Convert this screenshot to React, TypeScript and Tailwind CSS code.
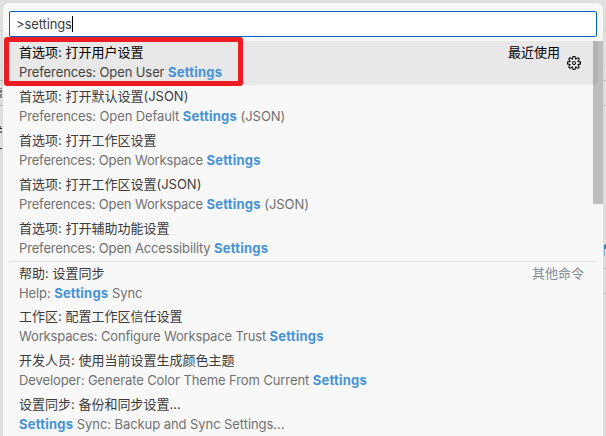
import { VscSettingsGear } from "react-icons/vsc";

type Command = { label: string; before: string; after?: string; note?: string; tight?: boolean };

const commands: Command[] = [
  { label: "首选项: 打开用户设置", before: "Preferences: Open User ", note: "最近使用" },
  { label: "首选项: 打开默认设置(JSON)", before: "Preferences: Open Default ", after: " (JSON)" },
  { label: "首选项: 打开工作区设置", before: "Preferences: Open Workspace ", tight: true },
  { label: "首选项: 打开工作区设置(JSON)", before: "Preferences: Open Workspace ", after: " (JSON)", tight: true },
  { label: "首选项: 打开辅助功能设置", before: "Preferences: Open Accessibility ", tight: true },
  { label: "帮助: 设置同步", before: "Help: ", after: " Sync", note: "其他命令" },
  { label: "工作区: 配置工作区信任设置", before: "Workspaces: Configure Workspace Trust ", tight: true },
  { label: "开发人员: 使用当前设置生成颜色主题", before: "Developer: Generate Color Theme From Current " },
  { label: "设置同步: 备份和同步设置...", before: "", after: " Sync: Backup and Sync Settings..." },
];

function Row({ command, index }: { command: Command; index: number }) {
  const selected = index === 0;
  const divided = index === 5;
  return (
    <li
      className={`flex h-11 shrink-0 justify-between pl-2.5 ${
        selected ? "rounded-[3px] bg-[#e8e8e8] text-black" : "text-[#3b3b3b]"
      } ${divided ? "mr-px border-t border-[#e0e0e0]" : ""}`}
    >
      <div className="flex flex-col whitespace-pre">
        <span className="h-5 leading-[22px]">{command.label}</span>
        <span
          className={`h-5 leading-[22px] ${command.tight ? "tracking-[-0.15px]" : "tracking-[-0.1px]"} ${
            selected ? "text-[#424242]" : "text-[#717171]"
          }`}
        >
          {command.before}
          <b className="font-bold tracking-[0.22px] text-[#4593d6]">Settings</b>
          {command.after && <span className="tracking-[-0.07px]">{command.after}</span>}
        </span>
      </div>
      {command.note && (
        <div className={`flex ${selected ? "pr-[17px]" : "pr-[13px] text-[#868d99]"}`}>
          <span className="leading-[22px]">{command.note}</span>
          {selected && <VscSettingsGear className="ml-[7px] mt-[15px] size-3.5 text-black" />}
        </div>
      )}
    </li>
  );
}

function LeftEdge() {
  return (
    <div className="flex w-[3px] shrink-0 flex-col">
      <i className="mt-[30px] h-px bg-[#cecece]" />
      <i className="mt-[34px] h-px bg-[#cecece]" />
      <i className="mt-[14px] h-px bg-[#b8b8b8]" />
      <i className="mt-[7px] h-px w-0.5 bg-[#8a8a8a]" />
      <i className="mt-px h-[3px] w-0.5 bg-[#777]" />
      <i className="mt-px h-1 w-0.5 bg-[#888]" />
      <i className="mt-[7px] h-px w-0.5 bg-[#b8b8b8]" />
      <i className="mt-5 h-0.5 w-px bg-[#777]" />
      <i className="h-px w-0.5 bg-[#222]" />
      <i className="mt-0.5 h-0.5 w-0.5 bg-[#777]" />
      <i className="mt-[15px] h-px w-0.5 bg-[#222]" />
    </div>
  );
}

function RightEdge() {
  return (
    <div className="flex w-[3px] shrink-0 flex-col items-end">
      <i className="mt-[30px] h-px w-0.5 bg-[#cecece]" />
      <i className="mt-[34px] h-px w-0.5 bg-[#cecece]" />
      <i className="mt-[14px] h-px w-0.5 bg-[#b8b8b8]" />
      <i className="mt-[24px] h-px w-0.5 bg-[#b8b8b8]" />
      <i className="mt-[138px] h-px w-px bg-[#5b96c8]" />
      <i className="h-1 w-0.5 bg-[#3f86c2]" />
      <i className="mr-px h-[7px] w-px bg-[#7eb0da]" />
      <i className="mt-3 h-px w-0.5 bg-[#b8b8b8]" />
      <i className="mt-[24px] h-px w-0.5 bg-[#b8b8b8]" />
    </div>
  );
}

export default function App() {
  return (
    <div className="relative flex h-[436px] w-[606px] overflow-hidden bg-[#e3e3e3] font-['Inter','Noto_Sans_CJK_SC',sans-serif] text-[13px]">
      <LeftEdge />
      <main className="relative mt-[3px] flex h-[440px] w-[600px] shrink-0 flex-col rounded-t-md bg-[#f8f8f8] pl-1.5 pt-2 shadow-[0_0_4px_rgba(0,0,0,0.08)]">
        <div className="flex h-[26px] w-[588px] shrink-0 items-center rounded-[2px] border border-[#005fb8] bg-white pl-1.5 text-[#3b3b3b]">
          <span className="pt-0.5 tracking-[-0.12px]">&gt;settings</span>
          <span className="h-4 w-px bg-black" />
        </div>
        <ul className="mt-1 flex w-[589px] flex-col">
          {commands.map((command, index) => (
            <Row key={command.label} command={command} index={index} />
          ))}
        </ul>
        <div className="absolute right-0 top-[38px] h-[163px] w-2.5 bg-[#646464]/40" />
      </main>
      <RightEdge />

      <div className="absolute left-1 top-[37px] h-[49px] w-[239px] rounded-[3px] border-[5px] border-[#ed1c24]" />
    </div>
  );
}
